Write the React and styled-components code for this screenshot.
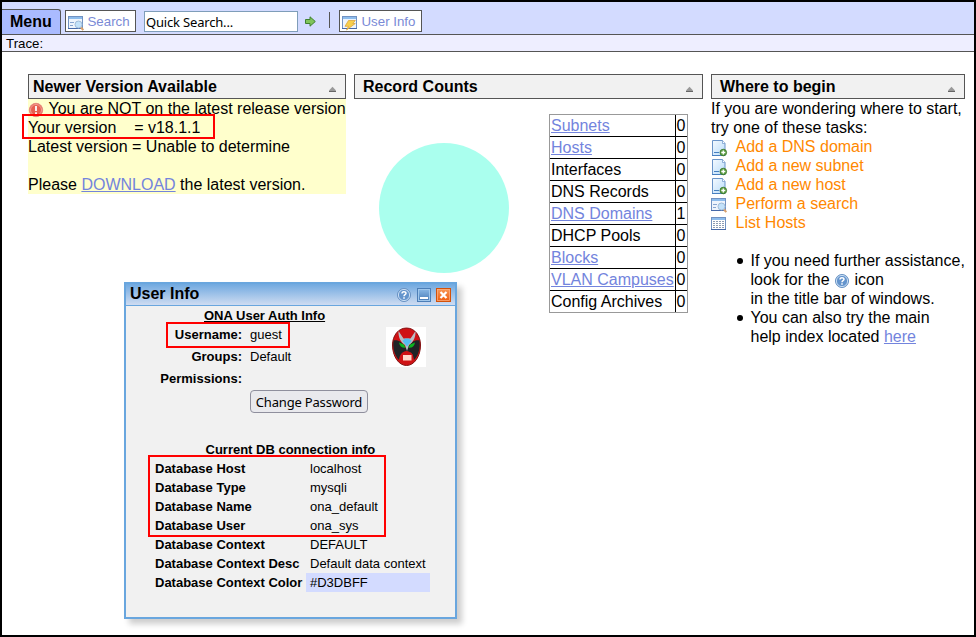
import React from "react";
import styled, { createGlobalStyle } from "styled-components";

const Global = createGlobalStyle`
  *, *::before, *::after { box-sizing: border-box; }
  body { margin: 0; background: #fff; font-family: "Liberation Sans", Arial, sans-serif; font-size: 16px; line-height: 19px; color: #000; }
  svg { display: block; flex: none; }
`;

const Frame = styled.div`
  position: relative;
  width: 976px;
  height: 637px;
  border: 2px solid #000;
  overflow: hidden;
  white-space: nowrap;
`;

const Toolbar = styled.div`
  display: flex;
  height: 33px;
  background: #d3dbff;
  border-bottom: 1px solid #555;
`;

const MenuTab = styled.div`
  width: 59px;
  margin-top: 7px;
  padding: 2px 0 0 8px;
  line-height: 20px;
  font-weight: bold;
  background: #aabbff;
  border-top: 1px solid #555;
  border-right: 1px solid #555;
  border-top-right-radius: 3px;
`;

const ToolButton = styled.div`
  display: flex;
  gap: 2.5px;
  width: ${(p) => p.$width}px;
  height: 22px;
  margin: 8px 0 0 ${(p) => p.$gap}px;
  padding: 4px 0 0 2px;
  background: #fff;
  border: 1px solid #555;
  color: #7a8ad6;
  font-size: 13.3px;
  line-height: 14px;
`;

const SearchField = styled.input`
  width: 154px;
  height: 21px;
  margin: 9px 0 0 8px;
  padding: 1px 1px 0;
  border: 1px solid #7f9db9;
  border-radius: 0;
  outline: none;
  background: #fff;
  color: #000;
  font: 13px "Noto Sans", sans-serif;
  letter-spacing: -0.18px;
`;

const Go = styled.div`
  margin: 14px 0 0 7px;
`;

const Divider = styled.div`
  width: 1px;
  height: 16px;
  margin: 10px 9px 0 13px;
  background: #555;
`;

const Trace = styled.div`
  height: 17px;
  padding-left: 4px;
  background: #eeeeff;
  border-bottom: 1px solid #555;
  font-size: 13.3px;
  line-height: 17px;
`;

const Columns = styled.div`
  display: flex;
  gap: 8px;
  padding: 22px 0 0 26px;
`;

const Column = styled.section`
  width: ${(p) => p.$width}px;
`;

const Heading = styled.div`
  display: flex;
  justify-content: space-between;
  height: 25px;
  padding: 2px 8px 0 ${(p) => p.$indent}px;
  border: 1px solid #555;
  background: #f1f1f1;
  font-weight: bold;
  line-height: 20px;
  svg { margin-top: 9px; }
`;

const Notice = styled.div`
  background: #ffffcc;
`;

const Line = styled.div`
  display: flex;
  height: 19px;
  white-space: pre;
`;

const IconSlot = styled.span`
  width: ${(p) => p.$width}px;
  padding-top: ${(p) => p.$top}px;
`;

const Link = styled.a`
  color: #7384dd;
  text-decoration: underline;
`;

const Task = styled(Line)`
  color: #ff8800;
`;

const Tips = styled.ul`
  margin: 19px 0 0;
  padding-left: 39.5px;
  list-style: none;
`;

const Tip = styled.li`
  display: flex;
  &::before {
    content: "";
    flex: none;
    width: 6px;
    height: 6px;
    margin: 7px 8px 0 -14px;
    border-radius: 50%;
    background: #000;
  }
`;

const CountsBody = styled.div`
  display: flex;
  align-items: flex-start;
  padding: 15px 0 0 25px;
`;

const Pie = styled.svg`
  margin: 29px 40px 0 0;
`;

const Counts = styled.div`
  width: 139px;
  border: 1px solid #999;
`;

const CountRow = styled.div`
  display: grid;
  grid-template-columns: 125px 12px;
  height: 22px;
  line-height: 21px;
  border-bottom: 1px solid #000;
  &:last-child { height: 21px; border-bottom: 0; }
`;

const CountName = styled.div`
  padding-left: 1px;
`;

const CountValue = styled.div`
  padding-left: 0.5px;
  border-left: 1px solid #000;
`;

const Window = styled.div`
  position: absolute;
  left: 122px;
  top: 280px;
  width: 333px;
  height: 337px;
  border: 2px solid #69a6de;
  background: #f1f1f1;
  box-shadow: 5px 5px 6px rgba(0, 0, 0, 0.2);
  font-size: 13px;
`;

const TitleBar = styled.div`
  display: flex;
  gap: 5px;
  height: 22px;
  padding: 0 4px 0 4px;
  border-bottom: 1px solid #69a6de;
  background: linear-gradient(#70a9e0, #cfdcf1);
  font-size: 16px;
  font-weight: bold;
  svg { margin-top: 3px; }
`;

const Title = styled.span`
  flex: 1;
`;

const Auth = styled.div`
  display: grid;
  grid-template-columns: 116px 136px 1fr;
  column-gap: 8px;
  height: 134px;
`;

const Labels = styled.div`
  padding-top: 18px;
  text-align: right;
  font-weight: bold;
  line-height: 22px;
`;

const Values = styled.div`
  line-height: 22px;
`;

const AuthTitle = styled.div`
  height: 18px;
  margin-left: -46px;
  line-height: 19px;
  font-weight: bold;
  text-decoration: underline;
`;

const Avatar = styled.div`
  width: 40px;
  height: 40px;
  margin-top: 21px;
  margin-left: -8px;
`;

const PasswordButton = styled.button`
  width: 118px;
  height: 23px;
  margin-top: 22px;
  padding: 0;
  display: block;
  border: 1px solid #8f8f9d;
  border-radius: 4px;
  background: #e9e9ed;
  color: #000;
  font: 13px "Noto Sans", sans-serif;
  letter-spacing: -0.18px;
`;

const DbTitle = styled.div`
  padding-left: 79.5px;
  font-weight: bold;
`;

const DbGrid = styled.div`
  display: grid;
  grid-template-columns: 151px 124px;
  grid-auto-rows: 19px;
  padding-left: 29px;
`;

const DbLabel = styled.div`
  font-weight: bold;
`;

const DbValue = styled.div`
  padding-left: 4px;
  background: ${(p) => (p.$tint ? "#d3dbff" : "transparent")};
`;

const Highlight = styled.div`
  position: absolute;
  left: ${(p) => p.$x - 2}px;
  top: ${(p) => p.$y - 2}px;
  width: ${(p) => p.$w}px;
  height: ${(p) => p.$h}px;
  border: 2px solid #f00;
`;

const HelpInline = styled.span`
  display: inline-block;
  vertical-align: top;
  padding-top: 3px;
  height: 19px;
`;

const Defs = () => (
  <svg width="0" height="0">
    <defs>
      <linearGradient id="sky" x2="0" y2="1"><stop stopColor="#8dbbe8" /><stop offset="1" stopColor="#4478b4" /></linearGradient>
      <linearGradient id="paper" x2="1" y2="1"><stop stopColor="#f4faff" /><stop offset="1" stopColor="#b9dcfa" /></linearGradient>
      <linearGradient id="fire" x2="0" y2="1"><stop stopColor="#f99a59" /><stop offset="1" stopColor="#ee5a0c" /></linearGradient>
    </defs>
  </svg>
);

const AppWindow = () => (
  <>
    <rect x=".5" y="1.5" width="14" height="12" fill="#eef4fc" stroke="#7192c2" />
    <rect x="1" y="2" width="13" height="2" fill="#8dbcec" />
    <path d="M0 13.500h15" stroke="#4568a8" />
  </>
);

const SearchIcon = () => (
  <svg width="17" height="16" viewBox="0 0 17 16">
    <AppWindow />
    <path d="M2 7.500h4M2 10.500h3M8 6.500h4" stroke="#87a5d0" />
    <circle cx="10.500" cy="9.500" r="3.500" fill="#c3e2fa" stroke="#a3bdd8" />
    <path d="M13 12.500l2.300 2.700" stroke="#d9a06c" strokeWidth="2" />
  </svg>
);

const BoltIcon = () => (
  <svg width="17" height="16" viewBox="0 0 17 16">
    <AppWindow />
    <path d="M6.500 5.500h6.800L10.800 8.500h2.500L4.500 15l2-3.700H3z" fill="#f8cf4c" stroke="#dba43d" strokeWidth=".8" />
  </svg>
);

const ListIcon = () => (
  <svg width="17" height="16" viewBox="0 0 17 16">
    <AppWindow />
    <rect x="1" y="4" width="13" height="9" fill="#fff" />
    <path d="M2 5.500h11M2 7.500h11M2 9.500h11M2 11.500h11" stroke="#8d9db5" strokeDasharray="2 1" />
  </svg>
);

const AddPageIcon = () => (
  <svg width="17" height="17" viewBox="0 0 17 17">
    <path d="M1.500.5h10l2.500 3v12H1.500z" fill="url(#paper)" stroke="#6a94c8" />
    <path d="M11.500.5v3H14" fill="#fff" stroke="#6a94c8" strokeWidth=".7" />
    <path d="M1 15.500h13M3 12.500h5" stroke="#467fc0" />
    <circle cx="12.300" cy="12.500" r="3.300" fill="#5e9f45" stroke="#367522" strokeWidth=".8" />
    <path d="M12.300 10.500v4M10.300 12.500h4" stroke="#fff" strokeWidth="1.300" />
  </svg>
);

const AlertIcon = () => (
  <svg width="16" height="16" viewBox="0 0 16 16">
    <circle cx="8" cy="8" r="6.700" fill="#e75f50" stroke="#e58b7e" />
    <circle cx="8" cy="8" r="5.500" fill="none" stroke="#f6b1a5" strokeWidth=".8" />
    <path d="M8 4v5M8 10.300v1.800" stroke="#fff" strokeWidth="1.800" />
  </svg>
);

const HelpIcon = () => (
  <svg width="16" height="16" viewBox="0 0 16 16">
    <circle cx="8" cy="8" r="6.500" fill="#6494cc" stroke="#6b93c3" />
    <circle cx="8" cy="8" r="5.600" fill="none" stroke="#c7ddf4" />
    <path d="M6 6.600c0-2.500 4-2.400 4-.3C10 7.700 8 7.700 8 9.200M8 10.300v1.500" fill="none" stroke="#fff" strokeWidth="1.500" />
  </svg>
);

const MinimizeIcon = () => (
  <svg width="14" height="16" viewBox="0 0 14 16">
    <rect x=".5" y="1.500" width="13" height="13" fill="url(#sky)" stroke="#4c7eb7" />
    <rect x="1.500" y="2.500" width="11" height="11" fill="none" stroke="#9fc6eb" />
    <path d="M3 11h8" stroke="#fff" strokeWidth="2" />
  </svg>
);

const CloseIcon = () => (
  <svg width="15" height="16" viewBox="0 0 15 16">
    <rect x=".5" y="1.500" width="14" height="13" fill="url(#fire)" stroke="#d35109" />
    <rect x="1.500" y="2.500" width="12" height="11" fill="none" stroke="#fbb185" strokeWidth=".7" />
    <path d="M4.500 5l6 6M10.500 5l-6 6" stroke="#fff" strokeWidth="2.200" />
  </svg>
);

const Triangle = () => (
  <svg width="9" height="7" viewBox="0 0 9 7">
    <path d="M4.500 .7L8 4.500V5.500H1V4.500z" fill="#999" />
    <path d="M1 5.500h7" stroke="#666" />
  </svg>
);

const ArrowIcon = () => (
  <svg width="11" height="11" viewBox="0 0 11 11">
    <path d="M.5 3.500H5V.8L10.300 5.500 5 10.200V7.500H.5z" fill="#80c55b" stroke="#3e8030" />
  </svg>
);

const Mask = () => (
  <svg width="40" height="40" viewBox="0 0 40 40">
    <rect width="40" height="40" fill="#fff" />
    <path d="M20.500 1C29 1 34.500 9 34.500 18c0 11-6 20.500-14 20.500S6.500 29 6.500 18C6.500 9 12 1 20.500 1z" fill="#cf1215" stroke="#801010" />
    <path d="M7.500 13.500c4-1 9 1 13 8.500 4-7.500 9-9.500 13-8.500 1 8-1 15-5.500 19.500-.5-5-3-8.500-7.500-9-4.500.5-7 4-7.500 9C8.500 28.500 6.500 21 7.500 13.500z" fill="#202326" />
    <path d="M13 15.500l5 2 1.500 3.200c-3 .6-6-1.200-6.500-5.200zM29 15.500l-5 2-1.500 3.200c3 .6 6-1.200 6.500-5.200z" fill="#0cb321" />
    <path d="M12.500 4l5 7.500h7l5-7.500c.3 6-2 11-6.500 14l-2 6-2-6C14.500 15 12.200 10 12.500 4z" fill="#b9bdc4" />
    <path d="M16.500 14l2.500-2.500h4l2.500 2.500-4.500 5.500z" fill="#56bdf0" />
    <path d="M17 25.500h8l2 2.500v7H15v-7z" fill="#cf1215" />
    <rect x="17" y="28" width="8.500" height="5.500" fill="#ffd7ca" />
  </svg>
);

const counts = [
  ["Subnets", 0, true], ["Hosts", 0, true], ["Interfaces", 0], ["DNS Records", 0],
  ["DNS Domains", 1, true], ["DHCP Pools", 0], ["Blocks", 0, true],
  ["VLAN Campuses", 0, true], ["Config Archives", 0],
];

const tasks = [
  ["Add a DNS domain", AddPageIcon, 3], ["Add a new subnet", AddPageIcon, 3],
  ["Add a new host", AddPageIcon, 3], ["Perform a search", SearchIcon, 3], ["List Hosts", ListIcon, 3],
];

const database = [
  ["Host", "localhost"], ["Type", "mysqli"], ["Name", "ona_default"], ["User", "ona_sys"],
  ["Context", "DEFAULT"], ["Context Desc", "Default data context"], ["Context Color", "#D3DBFF", true],
];

const UserWindow = () => (
  <Window>
    <TitleBar><Title>User Info</Title><HelpIcon /><MinimizeIcon /><CloseIcon /></TitleBar>
    <Auth>
      <Labels><div>Username:</div><div>Groups:</div><div>Permissions:</div></Labels>
      <Values>
        <AuthTitle>ONA User Auth Info</AuthTitle>
        <div>guest</div><div>Default</div>
        <PasswordButton>Change Password</PasswordButton>
      </Values>
      <Avatar><Mask /></Avatar>
    </Auth>
    <DbTitle>Current DB connection info</DbTitle>
    <DbGrid>
      {database.map(([name, value, tint]) => (
        <React.Fragment key={name}>
          <DbLabel>Database {name}</DbLabel>
          <DbValue $tint={tint}>{value}</DbValue>
        </React.Fragment>
      ))}
    </DbGrid>
  </Window>
);

export default function App() {
  return (
    <Frame>
      <Global />
      <Toolbar>
        <MenuTab>Menu</MenuTab>
        <ToolButton $width={71} $gap={4}><SearchIcon />Search</ToolButton>
        <SearchField defaultValue="Quick Search..." />
        <Go><ArrowIcon /></Go>
        <Divider />
        <ToolButton $width={83} $gap={0}><BoltIcon />User Info</ToolButton>
      </Toolbar>
      <Trace>Trace:</Trace>
      <Columns>
        <Column $width={318}>
          <Heading $indent={4}>Newer Version Available<Triangle /></Heading>
          <Notice>
            <Line><IconSlot $width={20.5} $top={3}><AlertIcon /></IconSlot>You are NOT on the latest release version</Line>
            <Line>{"Your version \u00a0\u00a0 = v18.1.1"}</Line>
            <Line>Latest version = Unable to determine</Line>
            <Line />
            <Line>Please <Link>DOWNLOAD</Link> the latest version.</Line>
          </Notice>
        </Column>
        <Column $width={349}>
          <Heading $indent={8}>Record Counts<Triangle /></Heading>
          <CountsBody>
            <Pie width="130" height="130"><circle cx="65" cy="65" r="65" fill="#aaffee" /></Pie>
            <Counts>
              {counts.map(([name, value, linked]) => (
                <CountRow key={name}>
                  <CountName>{linked ? <Link>{name}</Link> : name}</CountName>
                  <CountValue>{value}</CountValue>
                </CountRow>
              ))}
            </Counts>
          </CountsBody>
        </Column>
        <Column $width={254}>
          <Heading $indent={8}>Where to begin<Triangle /></Heading>
          <Line>If you are wondering where to start,</Line>
          <Line>try one of these tasks:</Line>
          {tasks.map(([label, Icon, top]) => (
            <Task key={label}><IconSlot $width={24.5} $top={top}><Icon /></IconSlot>{label}</Task>
          ))}
          <Tips>
            <Tip><div>If you need further assistance,<br />look for the <HelpInline><HelpIcon /></HelpInline> icon<br />in the title bar of windows.</div></Tip>
            <Tip><div>You can also try the main<br />help index located <Link>here</Link></div></Tip>
          </Tips>
        </Column>
      </Columns>
      <UserWindow />
      <Highlight $x={22} $y={114} $w={193} $h={25} />
      <Highlight $x={166} $y={322} $w={124} $h={26} />
      <Highlight $x={148} $y={455} $w={238} $h={82} />
      <Defs />
    </Frame>
  );
}
